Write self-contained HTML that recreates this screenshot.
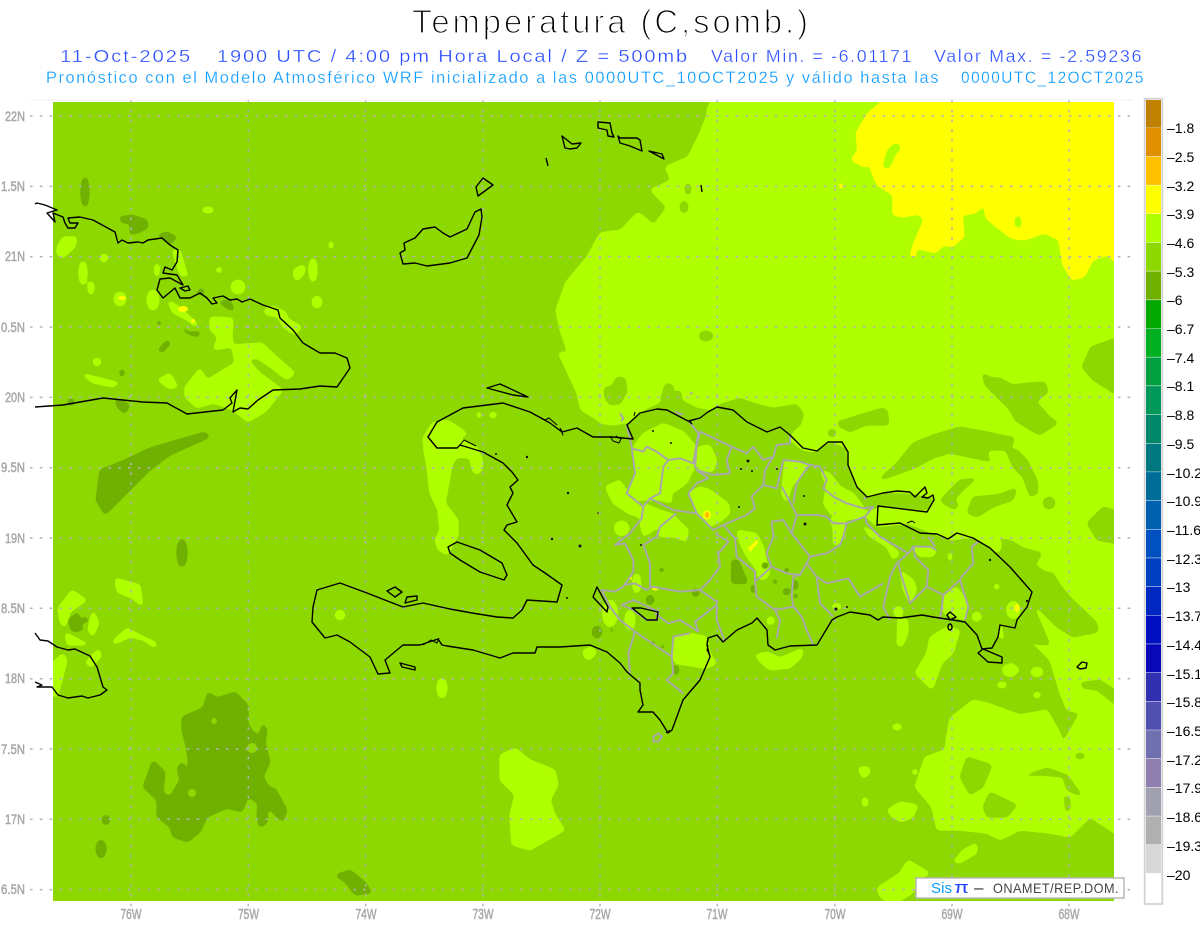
<!DOCTYPE html>
<html lang="es"><head><meta charset="utf-8"><title>Temperatura (C,somb.)</title>
<style>html,body{margin:0;padding:0;background:#fff}svg{display:block}text{font-family:"Liberation Sans",sans-serif}</style></head>
<body>
<svg width="1200" height="927" viewBox="0 0 1200 927" xmlns="http://www.w3.org/2000/svg">
<defs>
<clipPath id="m"><rect x="53" y="102" width="1061" height="799"/></clipPath>
<filter id="s" x="0" y="0" width="1200" height="927" filterUnits="userSpaceOnUse" color-interpolation-filters="sRGB">
<feGaussianBlur stdDeviation="2.2"/><feComponentTransfer><feFuncA type="linear" slope="8" intercept="-2.5"/></feComponentTransfer></filter>
</defs>
<rect width="1200" height="927" fill="#fff"/>
<text x="412" y="33" font-size="33" letter-spacing="3" lengthAdjust="spacingAndGlyphs" textLength="399" fill="#000" stroke="#fff" stroke-width="1.3">Temperatura (C,somb.)</text>
<g font-size="17.5" fill="#2b4dff" letter-spacing="1.6" stroke="#fff" stroke-width=".3">
<text x="60" y="62" lengthAdjust="spacingAndGlyphs" textLength="132">11-Oct-2025</text>
<text x="217" y="62" lengthAdjust="spacingAndGlyphs" textLength="472">1900 UTC / 4:00 pm Hora Local / Z = 500mb</text>
<text x="711" y="62" lengthAdjust="spacingAndGlyphs" textLength="202">Valor Min. = -6.01171</text>
<text x="934" y="62" lengthAdjust="spacingAndGlyphs" textLength="209">Valor Max. = -2.59236</text>
</g>
<g font-size="16.5" fill="#0a9bff" letter-spacing="1.6" stroke="#fff" stroke-width=".25">
<text x="46" y="83" lengthAdjust="spacingAndGlyphs" textLength="894">Pronóstico con el Modelo Atmosférico WRF inicializado a las 0000UTC_10OCT2025 y válido hasta las</text>
<text x="961" y="83" lengthAdjust="spacingAndGlyphs" textLength="184">0000UTC_12OCT2025</text>
</g>

<g clip-path="url(#m)">
<rect x="53" y="102" width="1061" height="799" fill="#8cd800"/>
<!-- main light region -->
<g fill="#b0ff00" filter="url(#s)">
<polygon points="716,90 707,110 707,115 700,133 688,157 665,167 671,180 650,190 667,207 654,225 638,212 621,230 600,233 587,257 566,282 556,310 560,330 568,353 558,352 577,393 581,410 598,420 600,423 613,425 630,422 643,410 660,402 663,390 682,390 683,400 697,407 713,410 720,403 740,397 757,403 773,407 797,403 805,413 802,425 793,433 790,440 803,450 813,452 827,443 833,442 847,448 848,462 857,487 867,497 883,492 910,493 933,497 934,502 927,511 878,507 877,527 907,523 930,532 950,540 973,537 990,548 1007,563 1032,590 1025,607 1017,620 1000,625 998,638 1007,637 1033,643 1050,660 1060,693 1067,710 1080,713 1063,743 1060,733 1047,710 1020,715 987,703 973,700 950,718 947,735 945,750 925,757 915,787 932,807 937,830 960,830 987,833 1000,840 1020,830 1050,833 1070,837 1090,817 1125,840 1125,90"/>
</g>
<!-- base patches over light -->
<g fill="#8cd800" filter="url(#s)">
<ellipse cx="661" cy="177" rx="3" ry="2.5"/><ellipse cx="688" cy="189" rx="3" ry="6"/><ellipse cx="684" cy="207" rx="4" ry="6"/><ellipse cx="706" cy="336" rx="7" ry="5"/><ellipse cx="665" cy="226" rx="2" ry="2"/>
<polygon points="604,388 612,386 617,377 625,378 627,392 620,404 610,405 605,398"/>
<polygon points="665,385 670,383 674,388 672,398 660,402"/>
<polygon points="849,420 870,413 887,409 889,425 845,425"/>
<polygon points="1125,335 1091,347 1082,367 1093,380 1125,400"/>
<polygon points="982,373 992,378 1000,378 1012,385 1030,383 1045,382 1048,392 1036,402 1050,417 1058,423 1040,435 1030,430 1020,420 1005,405 995,395 985,385"/>
<polygon points="1005,400 1025,404 1040,420 1030,430 1015,420"/>
<polygon points="1005,448 1017,450 1027,460 1037,480 1038,493 1030,497 1023,477 1013,467"/>
<polygon points="878,480 897,463 913,443 933,435 960,427 987,432 1015,438 1010,450 988,450 988,457 992,462 950,453 933,458 917,467 887,478"/>
<polygon points="940,500 960,480 977,478 963,490 948,507"/>
<polygon points="967,513 973,497 997,495 1017,488 1013,500 993,507 977,517"/>
<circle cx="1049" cy="503" r="6"/><circle cx="954" cy="505" r="4"/>
<polygon points="1087,523 1103,507 1125,513 1125,545 1097,540"/>
<polygon points="837,422 853,417 883,408 888,415 877,420 850,432 840,427"/>
<circle cx="832" cy="433" r="4"/>
<polygon points="997,540 1010,540 1023,548 1042,553 1035,565 1045,572 1053,573 1060,585 1070,597 1097,623 1098,632 1073,637 1057,627 1037,607 1020,620 1005,580 995,560"/>
<polygon points="1000,600 1035,610 1050,645 1005,642"/>
<polygon points="960,777 967,757 992,765 983,787 970,795"/>
<polygon points="983,807 990,792 1017,805 1007,817 987,817"/>
<polygon points="1020,777 1047,768 1067,775 1083,797 1067,790 1063,777 1040,775"/>
<polygon points="1064,795 1070,798 1070,810 1066,812"/>
<polygon points="1080,683 1100,680 1125,697 1125,712 1097,690 1083,688"/>
<ellipse cx="1080" cy="756" rx="5" ry="3"/>
</g>
<!-- yellow -->
<g fill="#ffff00" filter="url(#s)">
<polygon points="896,90 868,113 856,133 858,150 851,160 866,168 868,162 877,185 893,195 893,215 902,217 919,214 924,220 914,243 910,256 915,258 917,248 935,253 944,245 952,247 964,237 962,215 975,213 984,205 986,218 998,228 1011,238 1024,240 1045,233 1059,240 1063,265 1072,280 1084,277 1093,260 1107,255 1125,270 1125,90"/>
<polygon points="839,184 842,181 843,188 840,191"/>
</g>
<!-- light patches -->
<g fill="#b0ff00" filter="url(#s)">
<polygon points="883,167 888,150 896,143 901,147 896,153 889,168"/><ellipse cx="1018" cy="222" rx="3" ry="6"/>
<polygon points="57,247 63,237 77,237 75,247 63,258 57,255"/>
<ellipse cx="83" cy="273" rx="4" ry="12"/><ellipse cx="91" cy="288" rx="3" ry="7"/><ellipse cx="104" cy="258" rx="4" ry="4"/><ellipse cx="208" cy="210" rx="6" ry="3"/><ellipse cx="331" cy="245" rx="2" ry="5"/>
<polygon points="293,270 304,264 305,272 298,281 294,278"/><ellipse cx="313" cy="270" rx="4" ry="12"/><ellipse cx="317" cy="302" rx="5" ry="6"/><circle cx="219" cy="270" r="3"/><ellipse cx="238" cy="287" rx="7" ry="7"/><ellipse cx="120" cy="299" rx="6" ry="7"/><ellipse cx="153" cy="300" rx="6" ry="10"/>
<polygon points="172,250 180,250 188,277 180,275"/><ellipse cx="157" cy="270" rx="2.5" ry="7"/>
<polygon points="167,300 177,305 197,323 197,328 187,320 173,313"/>
<polygon points="210,317 233,318 232,337 233,345 262,343 277,357 295,373 287,380 270,367 257,358 248,360 260,373 283,390 267,410 263,413 248,422 233,410 213,403 197,408 185,397 185,387 200,368 207,380 223,370 235,363 232,347 213,350 218,337 210,330"/>
<polygon points="263,310 273,306 287,313 287,318 302,327 295,335 283,327 278,317 267,315"/>
<polygon points="80,373 100,378 120,383 113,387 93,383"/><circle cx="97" cy="362" r="4"/>
<polygon points="157,380 170,373 178,387 170,389"/>
<polygon points="115,578 140,585 143,607 132,598 117,592"/>
<polygon points="112,642 127,628 140,635 157,643 155,648 143,640 130,637 115,644"/>
<polygon points="58,608 72,590 87,600 70,612 65,628 60,622"/>
<polygon points="93,610 99,623 93,637 88,630 90,620"/>
<polygon points="65,632 80,640 90,645 67,645"/>
<polygon points="45,670 63,653 67,660 62,680 57,697 45,693"/>
<polygon points="85,663 98,649 102,655 92,667"/>
<polygon points="423,438 432,423 447,420 460,428 468,435 457,438 477,447 482,458 483,468 477,475 472,470 470,458 457,457 452,465 450,477 445,503 458,520 458,535 448,555 438,550 435,540 440,530 438,510 430,493 427,467 424,450"/>
<ellipse cx="479" cy="415" rx="2" ry="4"/><ellipse cx="493" cy="415" rx="4" ry="3"/>
<circle cx="340" cy="615" r="5"/><ellipse cx="442" cy="688" rx="5" ry="10"/><polygon points="583,650 592,647 597,652 590,660 584,658"/>
<polygon points="500,755 515,748 530,760 555,770 558,785 550,800 555,815 565,830 530,850 512,845 510,815 515,795 500,780"/>
<polygon points="755,655 767,652 780,658 803,648 802,657 790,668 770,670 760,662"/>
<polygon points="898,617 908,620 908,633 902,647 897,645"/>
<polygon points="930,637 947,627 960,630 953,653 942,663 932,690 915,673 927,653"/>
<polygon points="1002,667 1012,663 1020,670 1012,677 1004,675"/><ellipse cx="1037" cy="672" rx="6" ry="5"/><ellipse cx="1002" cy="685" rx="5" ry="3"/><ellipse cx="1037" cy="695" rx="4" ry="3"/>
<ellipse cx="897" cy="727" rx="5" ry="3"/><circle cx="912" cy="737" r="2"/><polygon points="858,767 870,767 869,775 862,778"/><ellipse cx="865" cy="802" rx="3" ry="5"/><circle cx="915" cy="772" r="3"/>
<polygon points="887,810 900,802 918,805 913,817 902,822 892,817"/>
<polygon points="877,888 900,873 908,860 930,873 917,882 913,893 893,905 880,897"/>
<polygon points="953,862 963,850 977,843 977,853 960,863"/>
<g transform="translate(600,390) scale(.33333)">
<polygon points="100,170 130,130 190,100 250,125 285,165 285,230 260,280 215,310 215,340 180,330 120,330 85,310 105,250"/>
<polygon points="295,170 330,165 350,210 340,245 295,240"/>
<polygon points="265,310 300,290 330,300 385,340 390,370 360,395 330,410 290,370"/>
<polygon points="130,340 180,360 225,375 225,400 180,410 130,440 120,400"/>
<polygon points="15,290 60,270 85,310 125,350 125,385 85,370 40,340"/><circle cx="65" cy="415" r="22"/>
<polygon points="190,390 230,385 265,420 260,455 220,440 175,440"/>
<polygon points="410,420 470,430 490,470 500,520 510,550 490,570 470,540 440,500 420,460"/>
<polygon points="555,210 625,220 600,260 575,290 560,340 545,310 550,260"/>
<polygon points="660,240 690,250 720,290 760,310 790,350 800,380 740,390 690,370 670,340 680,290"/>
<polygon points="690,380 740,400 730,450 700,470 700,420"/>
<polygon points="780,400 840,440 900,490 880,510 860,470 810,440"/>
<polygon points="790,370 850,350 830,410"/>
<polygon points="935,470 990,470 1010,480 1000,500 960,500"/>
<polygon points="900,540 940,570 950,600 930,640 910,600"/>
<polygon points="1030,620 1070,590 1105,640 1095,690 1030,670"/>
<ellipse cx="1190" cy="465" rx="14" ry="22"/><circle cx="1190" cy="590" r="9"/><ellipse cx="1130" cy="680" rx="14" ry="14"/><ellipse cx="1240" cy="660" rx="20" ry="26"/>
<ellipse cx="895" cy="665" rx="14" ry="16"/><ellipse cx="1050" cy="500" rx="6" ry="15"/>
<polygon points="220,745 270,730 320,740 330,790 350,820 320,835 225,820 215,790"/>
<circle cx="512" cy="692" r="12"/><ellipse cx="488" cy="555" rx="16" ry="14"/><ellipse cx="90" cy="690" rx="15" ry="30"/><ellipse cx="110" cy="580" rx="12" ry="30"/><ellipse cx="30" cy="670" rx="22" ry="40"/>
<ellipse cx="710" cy="650" rx="14" ry="10"/>
</g>
</g>
<!-- dark patches -->
<g fill="#70b000" filter="url(#s)">
<ellipse cx="85" cy="192" rx="4" ry="15"/>
<polygon points="119,217 132,215 147,220 148,228 140,232 130,235 130,223 122,223"/>
<polygon points="157,235 167,232 177,237 170,245"/><circle cx="201" cy="292" r="3.5"/>
<polygon points="218,302 230,300 235,312 227,308"/>
<polygon points="180,322 188,332 202,332 197,337 185,333"/>
<polygon points="158,350 167,340 171,343 162,353"/><ellipse cx="122" cy="373" rx="2.5" ry="4"/>
<polygon points="115,398 125,402 130,405 125,414 117,407"/><circle cx="71" cy="402" r="3.5"/><circle cx="159" cy="323" r="2.5"/><circle cx="238" cy="316" r="2"/>
<polygon points="96,500 100,470 125,460 150,448 205,432 210,437 170,455 150,470 130,490 105,515"/>
<ellipse cx="182" cy="553" rx="5" ry="14"/><circle cx="138" cy="470" r="3"/>
<polygon points="68,620 78,612 83,630 72,632"/><circle cx="85" cy="620" r="3"/>
<polygon points="182,717 203,708 208,692 217,698 235,692 248,705 248,725 258,737 263,723 267,730 265,743 270,762 263,777 270,788 275,788 287,810 283,822 275,815 268,807 267,823 260,828 257,817 258,803 248,797 242,812 227,808 207,817 200,832 188,842 173,837 170,827 157,817 157,800 143,787 153,760 165,772 163,793 170,797 180,780 177,767 183,762 190,777 187,750 182,730"/>
<ellipse cx="106" cy="820" rx="4" ry="5"/><ellipse cx="101" cy="849" rx="5" ry="9"/>
<polygon points="335,875 350,870 365,882 372,893 355,895 345,882"/>
<ellipse cx="597" cy="632" rx="5" ry="6"/>
<g transform="translate(600,390) scale(.33333)">
<polygon points="395,510 415,510 440,570 445,580 395,580"/><ellipse cx="460" cy="597" rx="7" ry="15"/><circle cx="185" cy="540" r="8"/><circle cx="495" cy="527" r="10"/><circle cx="525" cy="575" r="8"/><circle cx="560" cy="540" r="8"/><ellipse cx="585" cy="585" rx="10" ry="15"/><ellipse cx="560" cy="605" rx="12" ry="10"/><circle cx="587" cy="618" r="8"/><circle cx="287" cy="608" r="12"/><ellipse cx="227" cy="840" rx="10" ry="15"/><ellipse cx="150" cy="630" rx="12" ry="15"/><circle cx="158" cy="760" r="8"/><circle cx="188" cy="770" r="7"/><ellipse cx="35" cy="720" rx="5" ry="10"/><circle cx="178" cy="640" r="6"/>
</g>
</g>
<!-- holes in big dark patch -->
<g fill="#8cd800"><circle cx="214" cy="721" r="3"/><circle cx="252" cy="748" r="5"/><circle cx="192" cy="793" r="4"/></g>
<!-- yellow / orange spots -->
<g fill="#ffff00">
<ellipse cx="122" cy="298" rx="4" ry="2"/><ellipse cx="183" cy="309" rx="5" ry="3"/><circle cx="193" cy="321" r="2"/>
<ellipse cx="707" cy="515" rx="4" ry="4.5"/>
<polygon points="748,548 757,540 758,543 750,552"/>
<ellipse cx="1017" cy="608" rx="2.5" ry="4"/>
<ellipse cx="655" cy="589" rx="3" ry="1.5"/><ellipse cx="630" cy="578" rx="2" ry="1.5"/>
</g>
<ellipse cx="707" cy="515" rx="2.3" ry="3" fill="#ffc000"/>
</g>

<!-- grid -->
<g stroke="#b4b4b4" stroke-width="1.5" stroke-dasharray="2.6 7.2" fill="none">
<path d="M30 116H1133M30 186.4H1133M30 256.7H1133M30 327H1133M30 397.4H1133M30 467.7H1133M30 538H1133M30 608.3H1133M30 678.7H1133M30 749H1133M30 819.3H1133M30 889.6H1133"/>
<path d="M131 100V908M248.3 100V908M365.6 100V908M483 100V908M600 100V908M717.3 100V908M835 100V908M952 100V908M1069 100V908"/>
</g>
<path d="M30 100H1133" stroke="#f0f0f0" stroke-width="1"/>

<!-- DR provinces -->
<g clip-path="url(#m)"><g transform="translate(600,390) scale(.33333)" fill="none" stroke="#a8a8a8" stroke-width="6" stroke-linejoin="round">
<polyline points="80,105 95,170 105,250 80,310 130,350 125,385 90,430 45,465 75,460 100,510 100,545 70,590 45,605 5,600 30,650 60,690 105,725 85,790 90,850"/>
<polyline points="95,175 130,185 140,170 170,185 205,210 240,205 280,220 295,130 265,92"/>
<polyline points="285,235 290,170 300,125 395,170 440,190 460,170 490,210 520,200 530,165 570,160 570,135"/>
<polyline points="205,210 190,230 180,310 150,325 130,350"/>
<polyline points="150,325 220,360 290,370 265,310 290,280 325,265 290,240 340,255 390,250 380,210 395,170"/>
<polyline points="290,370 340,420 370,405 440,375 465,355 455,320 490,285 530,295 550,210"/>
<polyline points="545,290 575,345 590,375"/><polyline points="490,285 495,240 520,200"/>
<polyline points="550,210 600,215 630,225 610,250 590,280 580,340"/>
<polyline points="630,225 660,230 680,270 670,295 700,320 740,340 790,355"/>
<polyline points="590,375 650,375 680,380 700,400 740,400 730,440 720,465 680,490 630,500 575,430 590,375"/>
<polyline points="790,355 820,350 795,380 740,400"/>
<polyline points="795,380 800,400 840,440 925,490 890,520 870,560 850,650 870,690"/>
<polyline points="630,500 620,520 650,560 680,580 745,565 780,620 850,580"/>
<polyline points="620,520 600,555 560,550 515,530 500,490 520,440 515,395 550,390 575,430"/>
<polyline points="515,530 465,575 470,620 525,660 580,650 575,620 580,560 600,555"/>
<polyline points="580,650 605,680 620,720 640,765"/><polyline points="525,660 540,690 530,745"/>
<polyline points="650,560 660,640 700,680"/>
<polyline points="370,405 405,445 410,500 465,545 465,575"/>
<polyline points="345,430 385,455 355,490 360,530 330,570 300,600 240,605 155,590 140,600 105,580 70,585"/>
<polyline points="300,600 350,635 350,690 375,755"/>
<polyline points="350,645 285,695 295,725 240,690 205,700 165,670"/>
<polyline points="270,730 220,740 215,800 220,850 200,870 250,910"/>
<polyline points="105,725 215,800"/>
<polyline points="180,410 230,370"/><polyline points="180,410 170,440 130,465 150,520 150,590"/>
<polyline points="925,490 940,470 990,470 1010,480"/><polyline points="940,470 945,500 985,540 980,590 1030,615 1020,690"/>
<polyline points="980,590 930,640 905,560 895,520"/><polyline points="1030,615 1080,570 1105,650 1095,690"/>
<polyline points="1080,570 1085,560 1120,520 1115,470 1135,455"/><polyline points="985,440 1005,470"/>
<polygon points="65,645 100,630 175,665 170,690 140,690 100,660"/>
<polygon points="160,1040 175,1030 185,1040 175,1055 160,1055"/>
<path d="M60 70l10 15-6 8M225 65l25 10M270 10h8M790 325h10"/>
</g></g>

<!-- coast -->
<g fill="none" stroke="#000" stroke-width="1.4" stroke-linejoin="round">
<polygon points="633,439 627,425 640,413 657,409 667,410 688,421 700,418 708,412 717,407 733,410 747,422 767,432 780,427 790,435 803,448 817,451 828,442 842,442 848,452 848,465 857,487 867,497 883,493 897,491 910,492 915,497 925,487 927,493 922,497 928,498 933,495 934,500 927,512 878,506 877,525 900,523 920,533 937,534 948,539 957,533 973,538 990,548 1010,567 1032,592 1027,607 1017,620 1015,628 1000,625 998,637 992,648 982,649 977,635 965,622 953,620 933,617 922,615 900,618 883,617 878,620 870,615 850,612 837,617 832,620 817,645 790,646 775,650 768,645 767,630 757,618 752,623 737,630 723,642 717,635 708,638 707,645 710,657 700,680 683,700 672,730 668,733 660,720 653,712 638,712 643,705 640,690 640,683 627,672 620,663 607,652 590,645 560,647 537,647 535,653 513,653 500,658 473,650 447,646 442,645 438,639 420,645 403,645 385,660 390,673 378,674 370,657 350,642 337,635 325,638 312,622 313,607 317,590 340,583 367,593 390,602 403,607 423,603 450,609 472,613 497,617 513,618 522,610 527,600 557,602 562,585 545,573 533,565 517,543 504,530 507,525 517,522 507,505 513,493 510,487 518,480 512,472 503,463 483,452 460,445 457,448 437,448 428,437 437,422 463,408 503,403 530,412 550,423 562,432 577,428 593,437 613,437"/>
<path d="M610 436l3 5 6 2 2-4-5-3M560 428l3 7-2-6M460 445l4-5 12 6M423 645l8-5 6 3 2-5M530 412l15 8 4-2 8 7" stroke-width="1"/>
<path d="M635 412l-1 4M700 418l-10 3 2 3-4-3M708 645l-1 5 3 6M670 730l-4 3M907 523l5-2 3 2" stroke-width="1"/>
<polygon points="448,547 457,542 480,550 502,563 507,575 504,580 480,572 460,560 450,553"/>
<polygon points="487,388 500,384 513,390 528,397 513,395"/>
<polygon points="400,663 415,667 415,670 402,667"/>
<polygon points="387,591 395,587 402,592 395,597"/>
<polygon points="407,597 417,596 417,600 405,603"/>
<polygon points="597,587 593,597 607,612 608,607"/>
<polygon points="632,608 641,608 658,612 657,620 647,620"/>
<polygon points="978,653 983,649 1002,657 1002,663 988,662"/>
<polygon points="947,615 950,612 956,617 950,620"/><ellipse cx="950" cy="627" rx="2" ry="3"/>
<polygon points="1077,667 1082,662 1087,663 1086,668 1080,669"/>
<polyline points="35,204 37,203 45,205 57,210 47,213 55,222 53,213 63,217 65,223 68,228 75,228 78,223 70,223 68,218 80,217 93,220 115,232 118,243 122,240 128,243 138,242 143,243 148,240 162,238 170,245 178,250 177,262 172,270 165,267 163,273 177,275 183,285 170,278 160,279 157,290 163,298 175,288 180,298 190,298 200,293 207,298 212,304 217,303 213,298 223,296 230,300 237,299 242,302 250,299 263,305 278,310 280,318 293,330 303,343 320,353 335,353 347,358 350,368 337,387 320,386 300,389 273,390 258,400 248,409 240,408 233,412 237,390 230,398 232,403 223,410 187,414 167,403 143,402 103,398 63,405 35,407"/>
<polygon points="180,288 188,286 190,290 185,291"/>
<polyline points="35,633 40,640 48,641 57,647 68,650 75,649 90,656 97,667 103,687 107,690 100,695 88,698 82,696 68,698 58,695 52,687 37,687 42,685 35,682"/>
<polygon points="403,264 400,253 405,250 404,243 415,238 423,229 435,227 443,233 450,237 467,229 475,212 481,209 482,217 479,235 467,258 450,263 427,266 415,263"/>
<polygon points="476,187 483,178 493,185 478,196"/>
<polyline points="546,158 548,166"/>
<polygon points="562,136 572,144 581,143 577,148 570,149 565,148"/>
<polygon points="598,122 610,123 612,133 614,137 608,136 607,130 598,128"/>
<polygon points="618,136 620,143 630,146 642,151 640,140 637,138 620,138"/>
<polygon points="649,151 662,154 664,159"/>
<polyline points="701,185 702,192"/>
</g>
<g fill="#111">
<circle cx="653" cy="431" r="1"/><circle cx="671" cy="443" r="1"/><circle cx="748" cy="461" r="1.5"/><circle cx="741" cy="469" r="1"/><circle cx="752" cy="471" r="1"/><circle cx="777" cy="469" r="1"/><circle cx="804" cy="496" r="1"/><circle cx="739" cy="507" r="1"/><circle cx="805" cy="524" r="1.5"/><circle cx="990" cy="560" r="1.2"/><circle cx="1027" cy="601" r="1.2"/><circle cx="641" cy="545" r="1"/><circle cx="496" cy="454" r="1"/><circle cx="527" cy="457" r="1.2"/><circle cx="568" cy="493" r="1.2"/><circle cx="552" cy="539" r="1.2"/><circle cx="580" cy="546" r="1.5"/><circle cx="567" cy="598" r="1"/><circle cx="598" cy="513" r=".8"/><circle cx="836" cy="609" r="1.5"/><circle cx="847" cy="607" r="1"/>
</g>

<!-- axis labels -->
<g font-size="14" fill="#a8a8a8" stroke="#a8a8a8" stroke-width=".5">
<text x="5" y="121" textLength="20" lengthAdjust="spacingAndGlyphs">22N</text><text x="1" y="191" textLength="24" lengthAdjust="spacingAndGlyphs">1.5N</text><text x="5" y="261" textLength="20" lengthAdjust="spacingAndGlyphs">21N</text><text x="1" y="332" textLength="24" lengthAdjust="spacingAndGlyphs">0.5N</text><text x="5" y="402" textLength="20" lengthAdjust="spacingAndGlyphs">20N</text><text x="1" y="472" textLength="24" lengthAdjust="spacingAndGlyphs">9.5N</text><text x="5" y="543" textLength="20" lengthAdjust="spacingAndGlyphs">19N</text><text x="1" y="613" textLength="24" lengthAdjust="spacingAndGlyphs">8.5N</text><text x="5" y="683" textLength="20" lengthAdjust="spacingAndGlyphs">18N</text><text x="1" y="754" textLength="24" lengthAdjust="spacingAndGlyphs">7.5N</text><text x="5" y="824" textLength="20" lengthAdjust="spacingAndGlyphs">17N</text><text x="1" y="894" textLength="24" lengthAdjust="spacingAndGlyphs">6.5N</text>
</g>
<g font-size="15" fill="#a8a8a8" stroke="#a8a8a8" stroke-width=".5">
<text x="120.5" y="919" textLength="21" lengthAdjust="spacingAndGlyphs">76W</text><text x="238" y="919" textLength="21" lengthAdjust="spacingAndGlyphs">75W</text><text x="355.5" y="919" textLength="21" lengthAdjust="spacingAndGlyphs">74W</text><text x="472.5" y="919" textLength="21" lengthAdjust="spacingAndGlyphs">73W</text><text x="589.5" y="919" textLength="21" lengthAdjust="spacingAndGlyphs">72W</text><text x="706.5" y="919" textLength="21" lengthAdjust="spacingAndGlyphs">71W</text><text x="824.5" y="919" textLength="21" lengthAdjust="spacingAndGlyphs">70W</text><text x="941.5" y="919" textLength="21" lengthAdjust="spacingAndGlyphs">69W</text><text x="1058.5" y="919" textLength="21" lengthAdjust="spacingAndGlyphs">68W</text>
</g>

<!-- logo -->
<rect x="916" y="878" width="208" height="20" fill="#fff" stroke="#b8b8b8" stroke-width="1.5"/>
<text x="931" y="893" font-size="15" fill="#0a9bff" textLength="21">Sis</text>
<text x="954" y="893" font-size="17" fill="#2040ff" textLength="15" lengthAdjust="spacingAndGlyphs">π</text>
<text x="974" y="893" font-size="17" fill="#333">–</text>
<text x="993" y="893" font-size="14" fill="#444" letter-spacing=".5" textLength="126" lengthAdjust="spacingAndGlyphs">ONAMET/REP.DOM.</text>

<!-- colorbar -->
<rect x="1144.7" y="98.7" width="17.6" height="805.3" fill="#fff" stroke="#d2d2d2" stroke-width="1.8"/>
<g>
<rect x="1146" y="100" width="15" height="27.7" fill="#c08000"/>
<rect x="1146" y="128" width="15" height="28.2" fill="#e09000"/>
<rect x="1146" y="156.7" width="15" height="28.2" fill="#ffc000"/>
<rect x="1146" y="185.4" width="15" height="28.2" fill="#ffff00"/>
<rect x="1146" y="214" width="15" height="28.2" fill="#b0ff00"/>
<rect x="1146" y="242.7" width="15" height="28.2" fill="#8cd800"/>
<rect x="1146" y="271.4" width="15" height="28.2" fill="#70b000"/>
<rect x="1146" y="300.1" width="15" height="28.2" fill="#00a800"/>
<rect x="1146" y="328.7" width="15" height="28.2" fill="#00b020"/>
<rect x="1146" y="357.4" width="15" height="28.2" fill="#00a040"/>
<rect x="1146" y="386.1" width="15" height="28.2" fill="#009858"/>
<rect x="1146" y="414.8" width="15" height="28.2" fill="#008868"/>
<rect x="1146" y="443.5" width="15" height="28.2" fill="#007880"/>
<rect x="1146" y="472.1" width="15" height="28.2" fill="#006c98"/>
<rect x="1146" y="500.8" width="15" height="28.2" fill="#0060b0"/>
<rect x="1146" y="529.5" width="15" height="28.2" fill="#0050c0"/>
<rect x="1146" y="558.2" width="15" height="28.2" fill="#0040c0"/>
<rect x="1146" y="586.9" width="15" height="28.2" fill="#0028c0"/>
<rect x="1146" y="615.5" width="15" height="28.2" fill="#0010c0"/>
<rect x="1146" y="644.2" width="15" height="28.2" fill="#0808b8"/>
<rect x="1146" y="672.9" width="15" height="28.2" fill="#3030b0"/>
<rect x="1146" y="701.6" width="15" height="28.2" fill="#5050b0"/>
<rect x="1146" y="730.2" width="15" height="28.2" fill="#7070b0"/>
<rect x="1146" y="758.9" width="15" height="28.2" fill="#9080b0"/>
<rect x="1146" y="787.6" width="15" height="28.2" fill="#a0a0b0"/>
<rect x="1146" y="816.3" width="15" height="28.2" fill="#b0b0b0"/>
<rect x="1146" y="845" width="15" height="28.2" fill="#d8d8d8"/>
</g>
<g font-size="14" fill="#000">
<text x="1167" y="133">–1.8</text><text x="1167" y="162">–2.5</text><text x="1167" y="191">–3.2</text><text x="1167" y="219">–3.9</text><text x="1167" y="248">–4.6</text><text x="1167" y="277">–5.3</text><text x="1167" y="305">–6</text><text x="1167" y="334">–6.7</text><text x="1167" y="363">–7.4</text><text x="1167" y="391">–8.1</text><text x="1167" y="420">–8.8</text><text x="1167" y="449">–9.5</text><text x="1167" y="478">–10.2</text><text x="1167" y="506">–10.9</text><text x="1167" y="535">–11.6</text><text x="1167" y="564">–12.3</text><text x="1167" y="592">–13</text><text x="1167" y="621">–13.7</text><text x="1167" y="650">–14.4</text><text x="1167" y="679">–15.1</text><text x="1167" y="707">–15.8</text><text x="1167" y="736">–16.5</text><text x="1167" y="765">–17.2</text><text x="1167" y="793">–17.9</text><text x="1167" y="822">–18.6</text><text x="1167" y="851">–19.3</text><text x="1167" y="880">–20</text>
</g>
</svg>
</body></html>
